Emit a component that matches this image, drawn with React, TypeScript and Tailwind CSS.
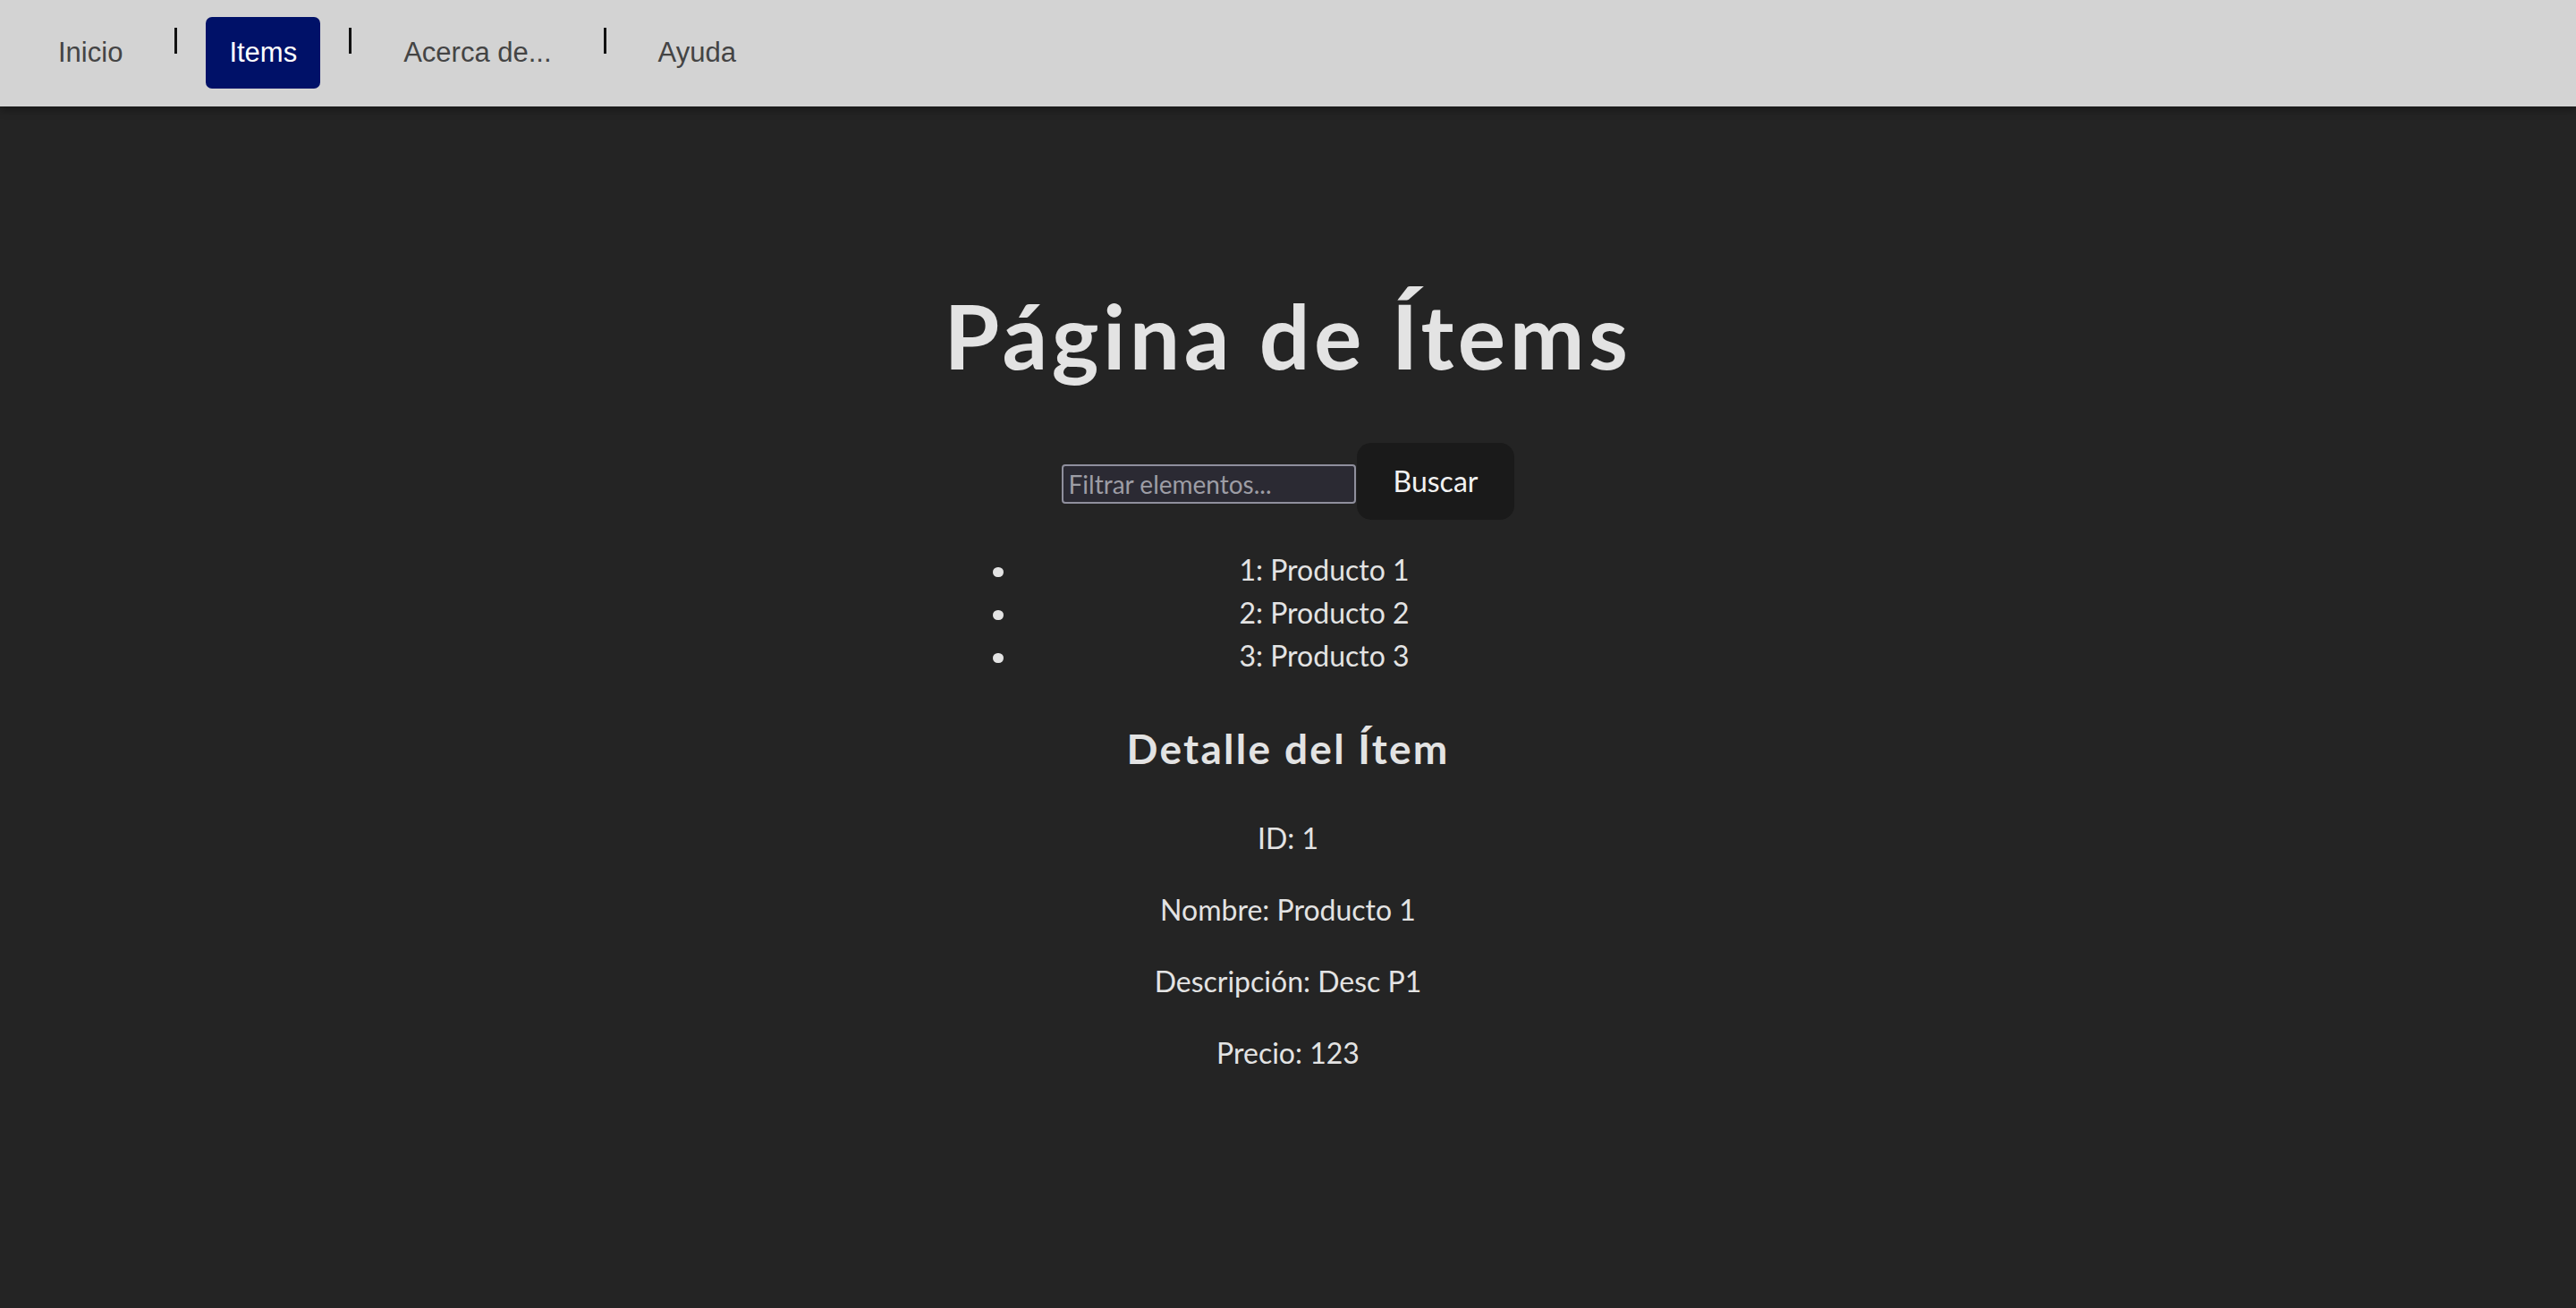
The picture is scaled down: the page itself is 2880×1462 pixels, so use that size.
import { Fragment } from 'react'

const navItems = ['Inicio', 'Items', 'Acerca de...', 'Ayuda']
const products = [
  { id: 1, name: 'Producto 1' },
  { id: 2, name: 'Producto 2' },
  { id: 3, name: 'Producto 3' },
]

export default function App() {
  const active = 'Items'
  const selected = { id: 1, name: 'Producto 1', desc: 'Desc P1', price: 123 }

  return (
    <div className="min-h-screen bg-[#242424] font-['Lato',sans-serif] text-[#e3e3e3]">
      {/* Top navigation */}
      <nav className="relative z-10 flex h-[119px] items-start bg-[#d3d3d3] pl-[39px] pt-[19px] font-['Liberation_Sans',Arial,sans-serif] shadow-[0_3px_10px_rgba(0,0,0,0.4)]">
        {navItems.map((label, i) => (
          <Fragment key={label}>
            {i > 0 && <span className="mx-[32px] mt-[12px] h-[29px] w-[3px] bg-[#111]" />}
            <a
              href="#"
              className={`rounded-[7px] px-[26px] py-[22px] text-[31px] leading-[36px] ${
                label === active ? 'bg-[#001168] text-white' : 'text-[#444]'
              }`}
            >
              {label}
            </a>
          </Fragment>
        ))}
      </nav>

      <main className="mx-auto flex w-fit flex-col text-center">
        <h1 className="mt-[200px] text-[100px] font-bold leading-[110px] tracking-[0.045em]">Página de Ítems</h1>

        {/* Filter row */}
        <div className="mt-[66px] flex items-center justify-center">
          <input
            type="text"
            placeholder="Filtrar elementos..."
            className="mt-[6px] h-[44px] w-[329px] rounded-[4px] border-2 border-[#8f8f9d] bg-[#2b2a33] px-[6px] text-[28px] text-[#e3e3e3] outline-none placeholder:text-[#9d9da5]"
          />
          <button className="ml-px rounded-[16px] border-2 border-transparent bg-[#1a1a1a] px-[39px] py-[18px] text-[32px] leading-[46px] text-[#f2f2f2]">
            Buscar
          </button>
        </div>

        <ul className="mt-[32px] pl-[54px] text-[32px] leading-[48px]">
          {products.map((p) => (
            <li key={p.id} className="flex items-center">
              <span className="mr-[15px] mt-[5px] h-[11px] w-[12px] shrink-0 rounded-full bg-[#e3e3e3]" />
              <span className="flex-1 text-center">
                {p.id}: {p.name}
              </span>
            </li>
          ))}
        </ul>

        <h2 className="mt-[45px] text-[46px] font-bold leading-[70px] tracking-[0.05em]">Detalle del Ítem</h2>

        <div className="mt-[41px] flex flex-col gap-[32px] text-[32px] leading-[48px]">
          <p>ID: {selected.id}</p>
          <p>Nombre: {selected.name}</p>
          <p>Descripción: {selected.desc}</p>
          <p>Precio: {selected.price}</p>
        </div>
      </main>
    </div>
  )
}
